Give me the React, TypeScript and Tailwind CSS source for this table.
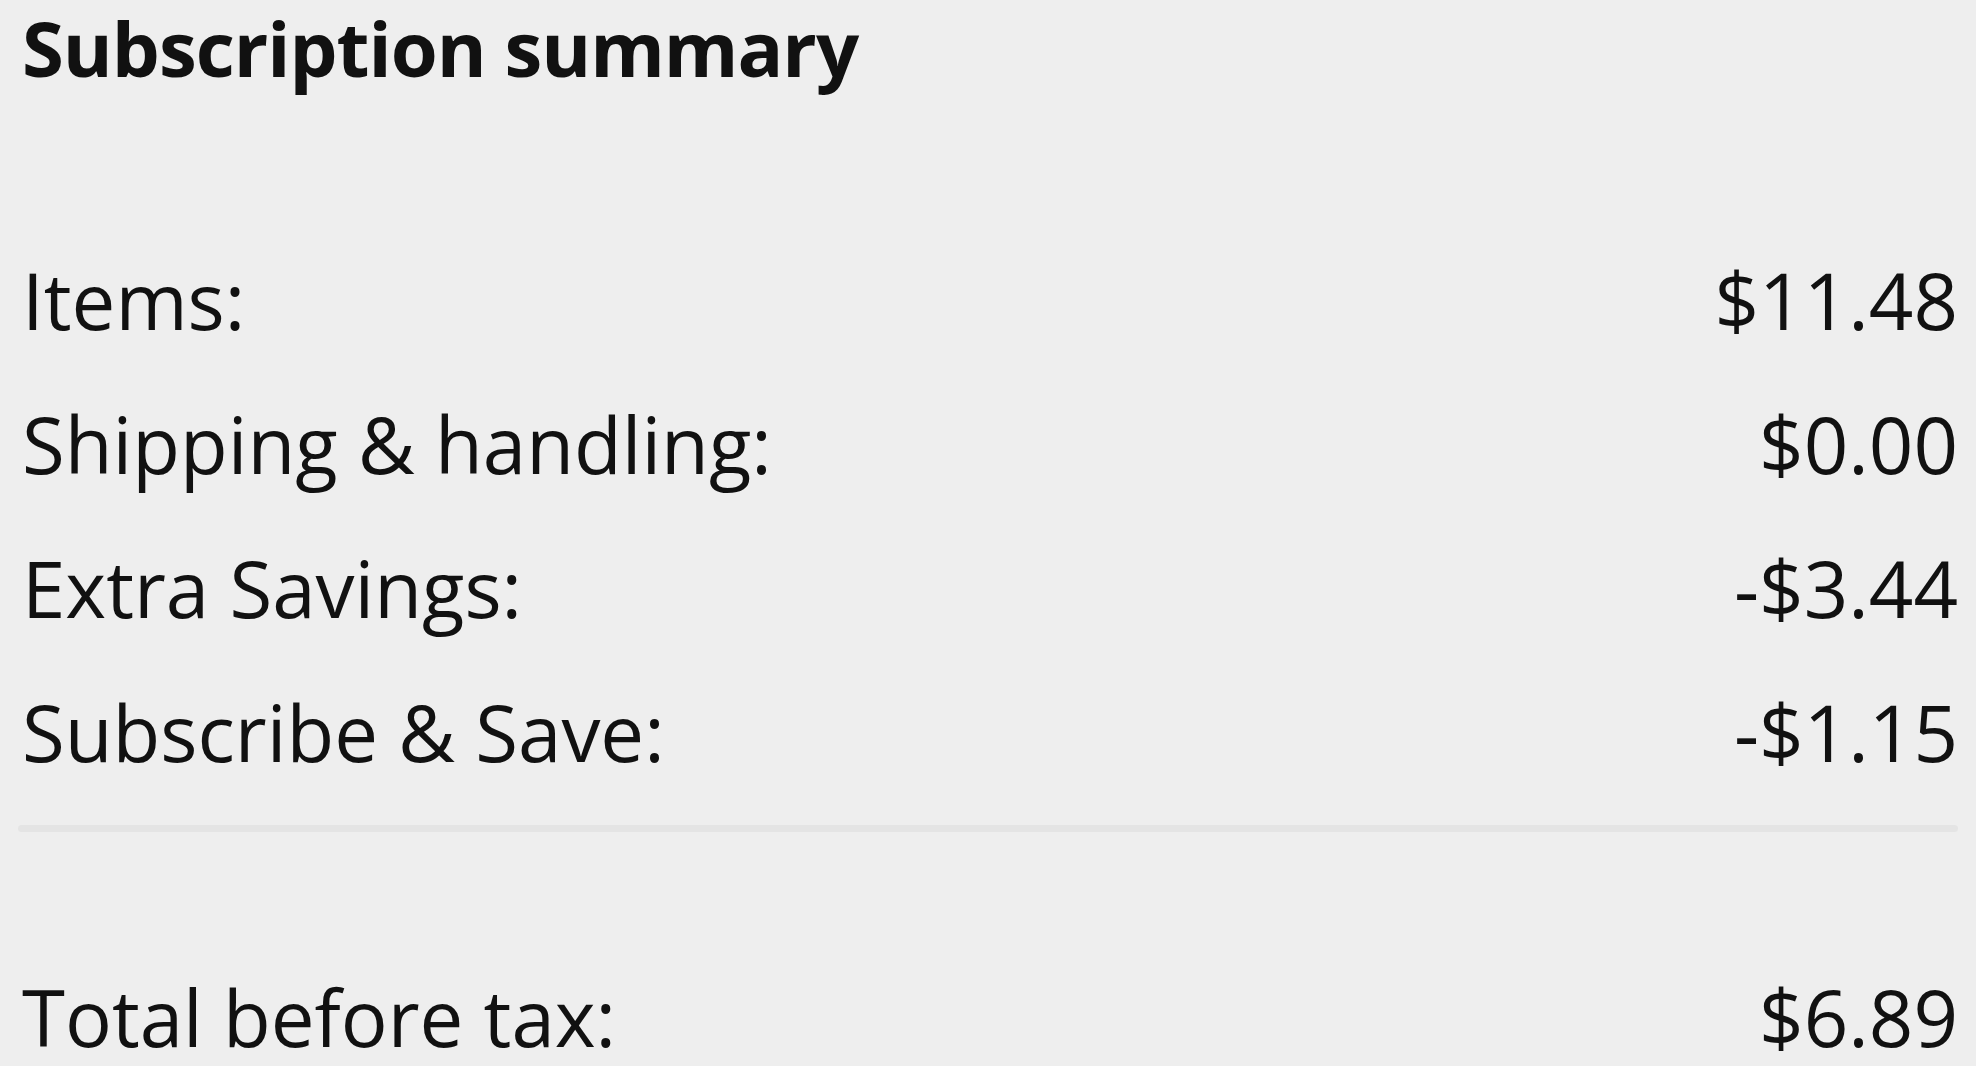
const rows = [
  { label: 'Items:', value: '$11.48' },
  { label: 'Shipping & handling:', value: '$0.00' },
  { label: 'Extra Savings:', value: '-$3.44' },
  { label: 'Subscribe & Save:', value: '-$1.15' },
];

const SummaryRow = ({ label, value }: { label: string; value: string }) => (
  <div className="flex items-center justify-between pl-[4px] text-[78px] leading-[144px]">
    <span>{label}</span>
    <span>{value}</span>
  </div>
);

export default function App() {
  return (
    <div className="min-h-[1066px] w-full overflow-hidden bg-[#eeeeee] px-[18px] text-[#111111] [font-family:'Open_Sans','Noto_Sans',sans-serif]">
      <h2 className="pl-[4px] text-[76px] font-bold leading-[96px] tracking-[-1px]">Subscription summary</h2>

      <div className="mt-[132px]">
        {rows.map((row) => (
          <SummaryRow key={row.label} {...row} />
        ))}
      </div>

      <div className="mt-[21px] h-[7px] rounded-full bg-[#e4e4e4]" />

      <div className="mt-[113px]">
        <SummaryRow label="Total before tax:" value="$6.89" />
      </div>
    </div>
  );
}
